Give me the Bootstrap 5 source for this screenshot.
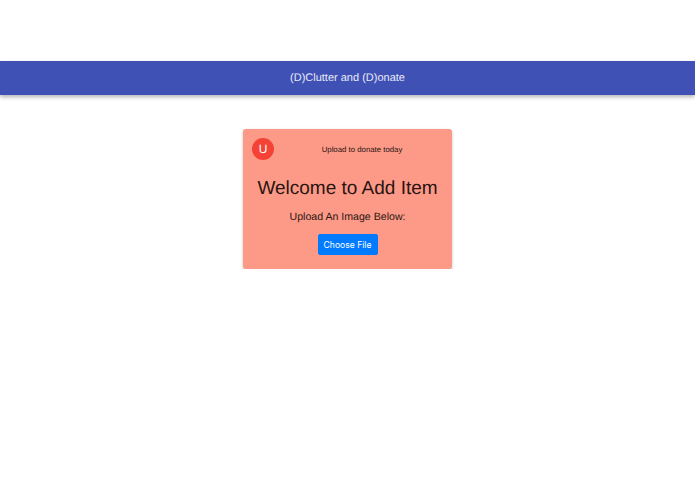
<!doctype html>
<html lang="en">
<head>
<meta charset="utf-8">
<title>(D)Clutter and (D)onate</title>
<link href="https://cdn.jsdelivr.net/npm/bootstrap@5.3.0/dist/css/bootstrap.min.css" rel="stylesheet">
<style>
body { font-family: "Liberation Sans", Arial, sans-serif; background: #fff; padding-top: 61px; text-rendering: geometricPrecision; }
.app-bar { height: 34px; background: #3f51b5; color: #e8eaf8; font-size: 11px; box-shadow: 0 2px 4px rgba(0,0,0,.3); }
.donate-card { width: 209px; height: 140px; margin-top: 34px; background: #fd9a87; border: 0; border-radius: 3px; box-shadow: 0 1px 3px rgba(0,0,0,.25); color: #2a1512; }
.avatar-dot { width: 22px; height: 22px; background: #f44336; color: #fff; font-size: 12px; flex: none; }
.card-top { padding: 9px 8px 0 9px; }
.card-sub { font-size: 7.8px; margin-left: 6px; margin-top: 1px; flex: 1; text-align: center; }
.card-head { font-size: 19px; line-height: 24px; margin: 17px 0 0; font-weight: 400; }
.card-line { font-size: 10.6px; line-height: 14px; margin: 9px 0 0; }
.file-btn { font-size: 8.6px; line-height: 12px; padding: 4px 2px; width: 60px; height: 21px; margin-top: 10px; background: #007bff; border-color: #007bff; border-radius: 2px; font-family: Inter, "Liberation Sans", sans-serif; white-space: nowrap; }
</style>
</head>
<body>
<nav class="app-bar d-flex align-items-center justify-content-center">(D)Clutter and (D)onate</nav>
<main class="d-flex justify-content-center">
  <div class="card donate-card text-center">
    <div class="card-top d-flex align-items-center">
      <span class="avatar-dot rounded-circle d-flex align-items-center justify-content-center">U</span>
      <span class="card-sub">Upload to donate today</span>
    </div>
    <h1 class="card-head">Welcome to Add Item</h1>
    <p class="card-line">Upload An Image Below:</p>
    <div><button type="button" class="btn btn-primary file-btn">Choose File</button></div>
  </div>
</main>
<script src="https://cdn.jsdelivr.net/npm/bootstrap@5.3.0/dist/js/bootstrap.bundle.min.js"></script>
</body>
</html>
